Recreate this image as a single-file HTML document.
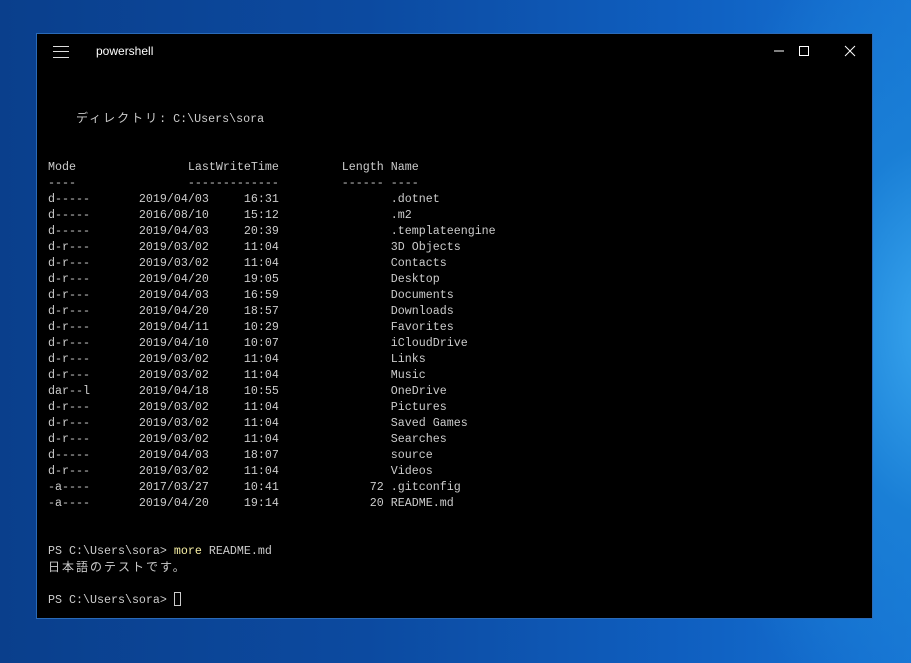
<!DOCTYPE html>
<html><head><meta charset="utf-8"><style>
html,body{margin:0;padding:0;width:911px;height:663px;overflow:hidden}
body{background:
 radial-gradient(ellipse 260px 420px at 940px 330px,#3aa8f0 0%,#1a7fd6 45%,rgba(20,100,200,0) 100%),
 linear-gradient(90deg,#0a3f8c 0%,#0c4aa0 40%,#0f5fc0 75%,#1673d4 100%);position:relative}
.win{position:absolute;left:36px;top:33px;width:837px;height:586px;background:#000;border:1px solid #2a6ab8;box-sizing:border-box}
.title{position:absolute;left:59px;top:10px;color:#fff;font:12px "Liberation Sans",sans-serif}
.ham{position:absolute;left:16px;top:12px;width:16px;height:10px;border-top:1px solid #ddd;border-bottom:1px solid #ddd}
.ham:after{content:"";position:absolute;left:0;top:4px;width:16px;height:1px;background:#ddd}
pre{position:absolute;left:11px;top:28px;margin:0;color:#cccccc;font:11.67px/16px "Liberation Mono","Noto Sans CJK JP",monospace;white-space:pre}
.j{font-family:"Noto Sans CJK JP",sans-serif;font-size:12px;letter-spacing:2px}
.y{color:#f9f1a5}
.cur{display:inline-block;width:7px;height:14px;border:1px solid #ccc;box-sizing:border-box;vertical-align:-3px}
</style></head><body>
<div class="win">
<div class="ham"></div>
<div class="title">powershell</div>
<svg style="position:absolute;left:737px;top:9px" width="90" height="16">
<line x1="0" y1="8" x2="10" y2="8" stroke="#fff" stroke-width="1"/>
<rect x="25.5" y="3.5" width="9" height="9" fill="none" stroke="#fff"/>
<line x1="71" y1="3" x2="81" y2="13" stroke="#fff"/><line x1="81" y1="3" x2="71" y2="13" stroke="#fff"/>
</svg>
<pre>



    <span class="j">ディレクトリ</span>: C:\Users\sora


Mode                LastWriteTime         Length Name
----                -------------         ------ ----
d-----       2019/04/03     16:31                .dotnet
d-----       2016/08/10     15:12                .m2
d-----       2019/04/03     20:39                .templateengine
d-r---       2019/03/02     11:04                3D Objects
d-r---       2019/03/02     11:04                Contacts
d-r---       2019/04/20     19:05                Desktop
d-r---       2019/04/03     16:59                Documents
d-r---       2019/04/20     18:57                Downloads
d-r---       2019/04/11     10:29                Favorites
d-r---       2019/04/10     10:07                iCloudDrive
d-r---       2019/03/02     11:04                Links
d-r---       2019/03/02     11:04                Music
dar--l       2019/04/18     10:55                OneDrive
d-r---       2019/03/02     11:04                Pictures
d-r---       2019/03/02     11:04                Saved Games
d-r---       2019/03/02     11:04                Searches
d-----       2019/04/03     18:07                source
d-r---       2019/03/02     11:04                Videos
-a----       2017/03/27     10:41             72 .gitconfig
-a----       2019/04/20     19:14             20 README.md


PS C:\Users\sora&gt; <span class="y">more</span> README.md
<span class="j">日本語のテストです。</span>

PS C:\Users\sora&gt; <span class="cur"></span></pre>
</div>
</body></html>
